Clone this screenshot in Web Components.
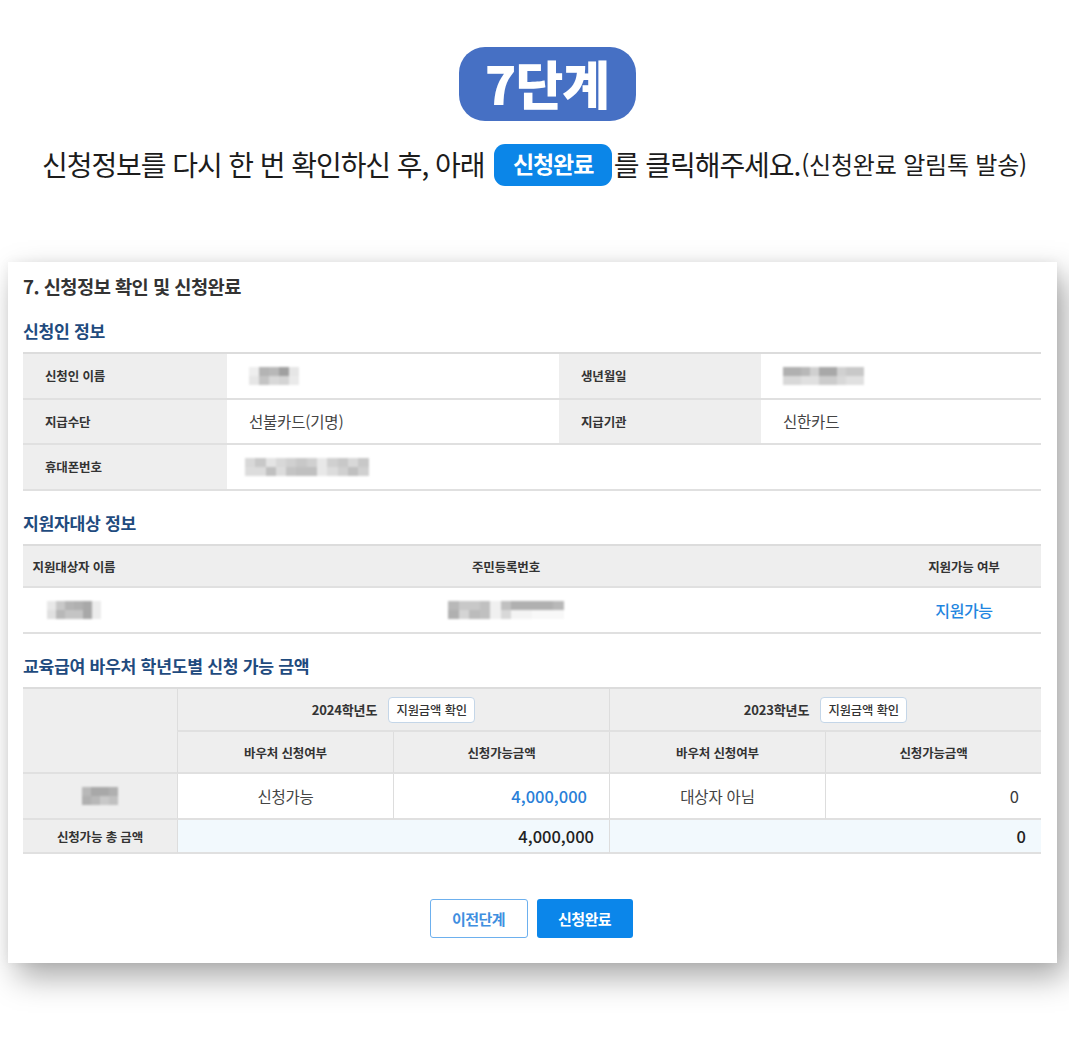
<!DOCTYPE html>
<html lang="ko">
<head>
<meta charset="utf-8">
<title>7단계</title>
<style>
html, body { margin: 0; background: #fff; }
body { font-family: "Noto Sans CJK KR", "Noto Sans", sans-serif; color: #333; width: 1069px; height: 1042px; overflow: hidden; }
</style>
</head>
<body>
<step-intro step="7단계">
   <span>신청정보를 다시 한 번 확인하신 후, 아래</span>
   <inline-chip>신청완료</inline-chip>
   <span class="rest">를 클릭해주세요.</span>
</step-intro>

<form-card heading="7. 신청정보 확인 및 신청완료">
   <section-title style="height:31px">신청인 정보</section-title>
   <applicant-table></applicant-table>
   <section-title style="margin-top:22px;height:31px">지원자대상 정보</section-title>
   <target-table></target-table>
   <section-title style="margin-top:22px;height:31px">교육급여 바우처 학년도별 신청 가능 금액</section-title>
   <amount-table></amount-table>
   <form-actions></form-actions>
</form-card>

<script>
// small pixelated box, stands for the masked personal data
class MaskBlock extends HTMLElement {
   connectedCallback() {
      const rows = this.getAttribute('shades').split('/').map(r => r.trim().split(' '));
      const cell = this.getAttribute('cell') || 8;
      const root = this.attachShadow({ mode: 'open' });
      const html = rows.map(r => r.map(c => `<i style="background:#${c}${c}${c}"></i>`).join('')).join('');
      root.innerHTML = `
         <style>
            :host { display: inline-block; line-height: 0; }
            div { display: grid; grid-template-columns: repeat(${rows[0].length}, ${cell}px); grid-auto-rows: 9px; filter: blur(1px); }
         </style>
         <div>${html}</div>`;
   }
}
customElements.define('mask-block', MaskBlock);

class InlineChip extends HTMLElement {
   constructor() {
      super();
      this.attachShadow({ mode: 'open' }).innerHTML = `
         <style>
            :host { display: inline-flex; align-items: center; justify-content: center; box-sizing: border-box; width: 119px; height: 42px; margin: 0 2px 0 10px; padding-bottom: 4px;
               background: #0b86e8; color: #fff; border-radius: 11px; font-size: 23px; font-weight: 700; letter-spacing: -1.1px; }
         </style>
         <slot></slot>`;
   }
}
customElements.define('inline-chip', InlineChip);

class StepIntro extends HTMLElement {
   constructor() {
      super();
      this.attachShadow({ mode: 'open' }).innerHTML = `
         <style>
            :host { display: flex; flex-direction: column; align-items: center; padding-top: 47px; }
            .pill { box-sizing: border-box; width: 177px; height: 74px; margin-left: 25px; padding-bottom: 3px; border-radius: 26px; background: #4670c4; color: #fff; display: flex; align-items: center; justify-content: center;
               font-size: 52px; font-weight: 900; letter-spacing: -1px; line-height: 1; }
            .line { display: flex; align-items: center; margin-top: 23px; height: 42px; font-size: 28px; letter-spacing: -1.07px; color: #1c1c1c; white-space: nowrap; width: 985px; }
            ::slotted(span) { padding-bottom: 3px; }
            small { font-size: 24px; letter-spacing: -.2px; margin-left: 1px; padding-bottom: 3px; }
         </style>
         <div class="pill"></div>
         <div class="line"><slot></slot><small>(신청완료 알림톡 발송)</small></div>`;
      this.shadowRoot.querySelector('.pill').textContent = this.getAttribute('step');
   }
}
customElements.define('step-intro', StepIntro);

class FormCard extends HTMLElement {
   constructor() {
      super();
      this.attachShadow({ mode: 'open' }).innerHTML = `
         <style>
            :host { display: block; box-sizing: border-box; width: 1049px; height: 701px; margin: 76px 0 0 8px; padding: 11px 16px 0 15px;
               background: #fff; box-shadow: 9px 14px 30px rgba(0,0,0,.34), 0 0 10px rgba(0,0,0,.05); }
            h2 { margin: 0 0 22px; font-size: 18.7px; line-height: 26px; font-weight: 700; letter-spacing: -.55px; color: #333; }
         </style>
         <h2></h2>
         <slot></slot>`;
      this.shadowRoot.querySelector('h2').textContent = this.getAttribute('heading');
   }
}
customElements.define('form-card', FormCard);

class SectionTitle extends HTMLElement {
   constructor() {
      super();
      this.attachShadow({ mode: 'open' }).innerHTML = `
         <style>
            :host { display: block; height: 32px; font-size: 17.2px; line-height: 20px; font-weight: 700; letter-spacing: -.3px; color: #1f4b7e; }
         </style>
         <slot></slot>`;
   }
}
customElements.define('section-title', SectionTitle);

const tableStyle = `
   :host { display: block; }
   .grid { display: grid; border-top: 2px solid #dcdcdc; }
   .c { display: flex; align-items: center; box-sizing: border-box; border-bottom: 2px solid #e0e0e0; min-width: 0; }
   .th { background: #eeeeee; font-size: 12.5px; font-weight: 700; letter-spacing: -.15px; color: #333; }
   .td { font-size: 15.5px; letter-spacing: -.2px; color: #444; }
   .center { justify-content: center; }
`;

class ApplicantTable extends HTMLElement {
   constructor() {
      super();
      this.attachShadow({ mode: 'open' }).innerHTML = `
         <style>${tableStyle}
            .grid { grid-template-columns: 204px 332px 202px 280px; grid-template-rows: 46px 45px 46px; }
            .th { padding-left: 22px; padding-bottom: 1px; }
            .td { padding-left: 22px; padding-bottom: 1px; }
            .wide { grid-column: span 3; }
         </style>
         <div class="grid">
            <div class="c th">신청인 이름</div>
            <div class="c td"><mask-block cell="10" shades="ee b4 b8 a0 e6 / e6 c4 d8 d4 ea"></mask-block></div>
            <div class="c th">생년월일</div>
            <div class="c td"><mask-block cell="9" shades="b0 b0 b8 d0 a8 a8 d0 c8 c8 / d8 d8 e0 e0 cc cc d8 e0 e0"></mask-block></div>
            <div class="c th">지급수단</div>
            <div class="c td">선불카드(기명)</div>
            <div class="c th">지급기관</div>
            <div class="c td">신한카드</div>
            <div class="c th">휴대폰번호</div>
            <div class="c td wide" style="padding-left:18px"><mask-block cell="10.3" shades="d8 c8 e4 d8 d0 c8 d0 e8 d0 c8 d8 c8 / dc dc c0 dc c4 c0 c0 e8 dc d0 c0 d0"></mask-block></div>
         </div>`;
   }
}
customElements.define('applicant-table', ApplicantTable);

class TargetTable extends HTMLElement {
   constructor() {
      super();
      this.attachShadow({ mode: 'open' }).innerHTML = `
         <style>${tableStyle}
            .grid { grid-template-columns: 102px 762px 154px; grid-template-rows: 42px 46px; }
            .go { color: #1f86e0; font-size: 16px; font-weight: 500; letter-spacing: -.4px; }
         </style>
         <div class="grid">
            <div class="c th center">지원대상자 이름</div>
            <div class="c th center">주민등록번호</div>
            <div class="c th center">지원가능 여부</div>
            <div class="c td center"><mask-block cell="9" shades="e8 c8 b4 b0 a8 ec / e0 b8 c4 c4 a8 ec"></mask-block></div>
            <div class="c td center"><mask-block cell="10.5" shades="b8 c8 c8 c0 f0 c0 b0 b0 b0 b0 b8 / b0 d4 bc c0 f0 d8 f4 f4 f8 f8 f8"></mask-block></div>
            <div class="c td center go">지원가능</div>
         </div>`;
   }
}
customElements.define('target-table', TargetTable);

class CheckButton extends HTMLElement {
   constructor() {
      super();
      this.attachShadow({ mode: 'open' }).innerHTML = `
         <style>
            :host { display: inline-flex; align-items: center; justify-content: center; box-sizing: border-box; width: 87px; height: 26px; margin-left: 11px;
               background: #fff; border: 1px solid #c4d6e8; border-radius: 4px; font-size: 12.3px; font-weight: 500; letter-spacing: -.1px; color: #333; }
         </style>
         <slot></slot>`;
   }
}
customElements.define('check-button', CheckButton);

class AmountTable extends HTMLElement {
   constructor() {
      super();
      this.attachShadow({ mode: 'open' }).innerHTML = `
         <style>${tableStyle}
            .grid { grid-template-columns: 154px 216px 216px 216px 216px; grid-template-rows: 43px 42px 46px 34px; }
            .c + .c { border-left: 1px solid #dddddd; }
            .c.first { border-left: 0; }
            .year { grid-column: span 2; font-size: 13px; }
            .corner { grid-row: span 2; }
            .td { font-size: 15.5px; }
            .right { justify-content: flex-end; padding-right: 22px; font-size: 16.5px; letter-spacing: 0; color: #3a3a3a; }
            .blue { color: #2a7fd8; font-weight: 500; }
            .sum { grid-column: span 2; background: #f2f9fd; justify-content: flex-end; padding-right: 15px; font-size: 16.5px; font-weight: 500; letter-spacing: 0; color: #222; }
         </style>
         <div class="grid">
            <div class="c th corner first"></div>
            <div class="c th center year">2024학년도<check-button>지원금액 확인</check-button></div>
            <div class="c th center year">2023학년도<check-button>지원금액 확인</check-button></div>
            <div class="c th center" style="grid-column:2">바우처 신청여부</div>
            <div class="c th center">신청가능금액</div>
            <div class="c th center">바우처 신청여부</div>
            <div class="c th center">신청가능금액</div>
            <div class="c th center first"><mask-block cell="9" shades="b8 a8 a8 b0 / b0 b8 c8 c0"></mask-block></div>
            <div class="c td center">신청가능</div>
            <div class="c td right blue">4,000,000</div>
            <div class="c td center">대상자 아님</div>
            <div class="c td right">0</div>
            <div class="c th center first">신청가능 총 금액</div>
            <div class="c sum">4,000,000</div>
            <div class="c sum">0</div>
         </div>`;
   }
}
customElements.define('amount-table', AmountTable);

class FormActions extends HTMLElement {
   constructor() {
      super();
      this.attachShadow({ mode: 'open' }).innerHTML = `
         <style>
            :host { display: flex; justify-content: center; gap: 9px; margin-top: 45px; padding-right: 2px; }
            div { box-sizing: border-box; height: 39px; display: flex; align-items: center; justify-content: center; border-radius: 3px;
               font-size: 15px; font-weight: 700; letter-spacing: -.6px; }
            .prev { width: 98px; background: #fff; border: 1.5px solid #6db0ee; color: #3f8fe0; }
            .done { width: 96px; background: #0b86ea; color: #fff; }
         </style>
         <div class="prev">이전단계</div>
         <div class="done">신청완료</div>`;
   }
}
customElements.define('form-actions', FormActions);
</script>
</body>
</html>
